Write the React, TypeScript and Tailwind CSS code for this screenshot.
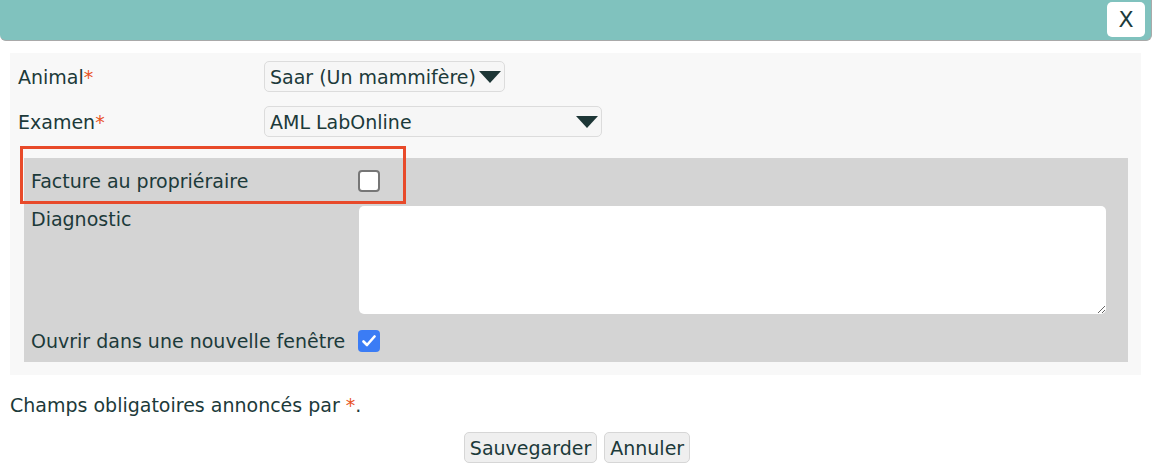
import { useState } from "react";

const font = { fontFamily: '"DejaVu Sans", Verdana, sans-serif' };

function Req() {
  return <span className="text-[#e8531f]">*</span>;
}

function Caret() {
  return (
    <svg width="22" height="12" viewBox="0 0 22 12" className="shrink-0">
      <path d="M0 0 H22 L11 12 Z" fill="#1d3636" />
    </svg>
  );
}

function SelectBox({ value, width }: { value: string; width?: string }) {
  return (
    <div
      className={`flex h-[31px] items-center justify-between gap-[3px] rounded-[5px] border border-[#dcdcdc] bg-[#f6f6f6] pl-[5px] pr-[3px] ${width ?? ""}`}
    >
      <span className="whitespace-nowrap">{value}</span>
      <Caret />
    </div>
  );
}

function Check({ checked, onChange }: { checked: boolean; onChange: () => void }) {
  return (
    <button
      type="button"
      onClick={onChange}
      className={
        "flex h-[22px] w-[22px] items-center justify-center rounded-[4px] " +
        (checked ? "bg-[#3b7cf5]" : "border-2 border-[#767676] bg-white")
      }
    >
      {checked && (
        <svg width="14" height="12" viewBox="0 0 14 12">
          <path d="M1.5 6.5 L5 10 L12.5 1.5" fill="none" stroke="white" strokeWidth="2.6" strokeLinecap="round" strokeLinejoin="round" />
        </svg>
      )}
    </button>
  );
}

export default function App() {
  const [invoice, setInvoice] = useState(false);
  const [newWin, setNewWin] = useState(true);

  return (
    <div className="h-[472px] w-[1158px] bg-white text-[19px] leading-[24px] text-[#1c3a3a]" style={font}>
      {/* title bar */}
      <div className="flex h-[41px] w-[1152px] items-start justify-end rounded-b-[6px] border-b border-r border-[#a9a9a9] bg-[#80c2be] pr-[6px] pt-[2px]">
        <button
          type="button"
          className="flex h-[35px] w-[38px] items-center justify-center rounded-[5px] bg-white text-[22px]"
        >
          X
        </button>
      </div>

      {/* form */}
      <div className="ml-[10px] mt-[12px] w-[1131px] bg-[#f8f8f8] pb-[13px] pt-[8px]">
        <div className="flex items-center pl-[8px]">
          <div className="w-[246px]">
            Animal
            <Req />
          </div>
          <SelectBox value="Saar (Un mammifère)" />
        </div>
        <div className="mt-[14px] flex items-center pl-[8px]">
          <div className="w-[246px]">
            Examen
            <Req />
          </div>
          <SelectBox value="AML LabOnline" width="w-[338px]" />
        </div>

        <div className="relative ml-[14px] mt-[21px] w-[1104px] bg-[#d4d4d4] pb-[8px] pl-[7px] pt-[9px]">
          <div className="pointer-events-none absolute left-[-4px] top-[-12px] h-[58px] w-[386px] border-[3px] border-[#e84a2a]" />
          <div className="flex h-[28px] items-center">
            <div className="w-[327px]">Facture au propriéraire</div>
            <Check checked={invoice} onChange={() => setInvoice(!invoice)} />
          </div>
          <div className="mt-[11px] flex items-start">
            <div className="w-[328px] leading-[26px]">Diagnostic</div>
            <textarea className="h-[108px] w-[747px] resize-y rounded-[5px] bg-white outline-none" />
          </div>
          <div className="mt-[14px] flex h-[26px] items-center">
            <div className="w-[327px] whitespace-nowrap">Ouvrir dans une nouvelle fenêtre</div>
            <Check checked={newWin} onChange={() => setNewWin(!newWin)} />
          </div>
        </div>
      </div>

      <div className="ml-[10px] mt-[18px]">
        Champs obligatoires annoncés par <Req />.
      </div>

      <div className="mt-[15px] flex justify-center gap-[7px] pr-[4px]">
        <button type="button" className="h-[31px] rounded-[5px] border border-[#d6d6d6] bg-[#efefef] px-[5px]">
          Sauvegarder
        </button>
        <button type="button" className="h-[31px] rounded-[5px] border border-[#d6d6d6] bg-[#efefef] px-[5px]">
          Annuler
        </button>
      </div>
    </div>
  );
}
